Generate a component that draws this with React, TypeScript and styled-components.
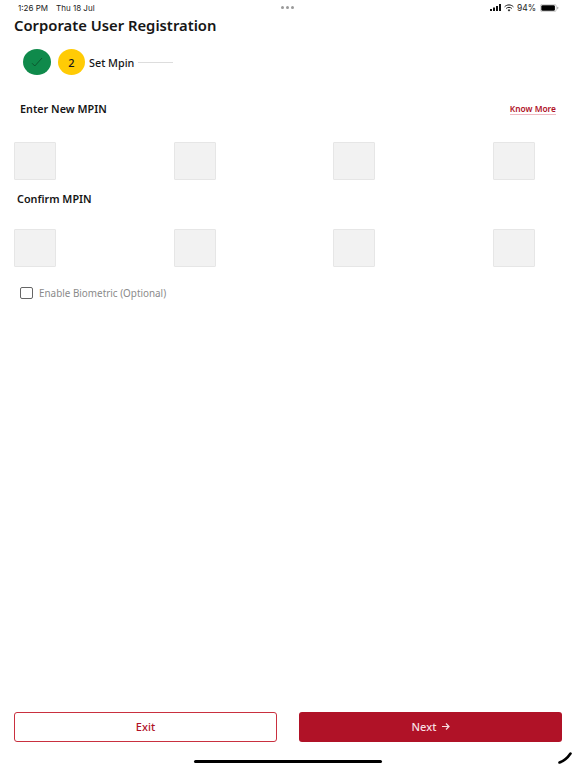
import styled, { createGlobalStyle } from "styled-components";

const GlobalStyle = createGlobalStyle`
  html, body {
    margin: 0;
    padding: 0;
    background: #ffffff;
  }
  * {
    box-sizing: border-box;
  }
`;

const PIN_SLOTS = [0, 1, 2, 3];

function PinRow() {
  return (
    <PinBoxes>
      {PIN_SLOTS.map((slot) => (
        <PinBox key={slot} />
      ))}
    </PinBoxes>
  );
}

export default function App() {
  return (
    <Page>
      <GlobalStyle />
      <StatusBar>
        <StatusTime>1:26 PM</StatusTime>
        <StatusDate>Thu 18 Jul</StatusDate>
        <StatusDots>
          <Dot />
          <Dot />
          <Dot />
        </StatusDots>
        <StatusRight>
          <svg width="12" height="7" viewBox="0 0 12 7" fill="#111">
            <rect x="0" y="5" width="2" height="2" />
            <rect x="3" y="3.5" width="2" height="3.5" />
            <rect x="6" y="2" width="2" height="5" />
            <rect x="9" y="0" width="2" height="7" />
          </svg>
          <svg width="10" height="8" viewBox="0 0 10 8" fill="none" stroke="#111">
            <path d="M0.6 2.8 C3 0.3 7 0.3 9.4 2.8" strokeWidth="1" />
            <path d="M2.2 4.4 C3.8 3 6.2 3 7.8 4.4" strokeWidth="1" />
            <path d="M5 7.6 L3.7 6 C4.4 5.4 5.6 5.4 6.3 6 Z" fill="#111" stroke="none" />
          </svg>
          <StatusPercent>94%</StatusPercent>
          <svg width="19" height="8" viewBox="0 0 19 8">
            <rect x="0.3" y="0.3" width="16" height="7.4" rx="2.2" fill="none" stroke="#aaa" strokeWidth="0.6" />
            <rect x="1.3" y="1.3" width="13.6" height="5.4" rx="1.3" fill="#000" />
            <rect x="17.2" y="2.8" width="1" height="2.4" rx="0.5" fill="#aaa" />
          </svg>
        </StatusRight>
      </StatusBar>

      <Title>Corporate User Registration</Title>

      <Stepper>
        <DoneStep>
          <svg width="12" height="10" viewBox="0 0 12 10" fill="none" stroke="#0b4a28" strokeWidth="0.8">
            <path d="M1 6.2 L3.8 9 L11 1" />
          </svg>
        </DoneStep>
        <CurrentStep>2</CurrentStep>
        <StepLabel>Set Mpin</StepLabel>
        <StepLine />
      </Stepper>

      <NewPinHeader>
        <NewPinLabel>Enter New MPIN</NewPinLabel>
        <KnowMore>Know More</KnowMore>
      </NewPinHeader>
      <PinRow />

      <ConfirmLabel>Confirm MPIN</ConfirmLabel>
      <PinRow />

      <BiometricRow>
        <CheckBox />
        <BiometricText>Enable Biometric (Optional)</BiometricText>
      </BiometricRow>

      <Spacer />

      <Footer>
        <ExitButton>Exit</ExitButton>
        <NextButton>
          Next
          <svg width="9" height="9" viewBox="0 0 9 9" fill="none" stroke="#f7dfe2" strokeWidth="1.2">
            <path d="M1 4.5 H8 M5 1.5 L8 4.5 L5 7.5" />
          </svg>
        </NextButton>
      </Footer>

      <HomeArea>
        <HomeIndicator />
      </HomeArea>
      <PencilMark width="14" height="12" viewBox="0 0 14 12" fill="none" stroke="#000" strokeWidth="2.6" strokeLinecap="round">
        <path d="M1.5 10.5 C6 9 9.5 6 12.5 1.5" />
      </PencilMark>
    </Page>
  );
}

const Page = styled.div`
  position: relative;
  display: flex;
  flex-direction: column;
  width: 576px;
  height: 768px;
  overflow: hidden;
  background: #ffffff;
  font-family: "Noto Sans", sans-serif;
  color: #161616;
`;

const StatusBar = styled.div`
  display: flex;
  align-items: center;
  height: 15px;
  padding: 0 18px;
  font-family: "Inter", sans-serif;
  font-size: 8px;
  color: #222222;
`;

const StatusTime = styled.span`
  width: 38px;
`;

const StatusDate = styled.span`
  width: 225px;
`;

const StatusDots = styled.div`
  display: flex;
  gap: 2px;
`;

const Dot = styled.span`
  width: 3px;
  height: 3px;
  border-radius: 50%;
  background: #9a9a9a;
`;

const StatusRight = styled.div`
  display: flex;
  align-items: center;
  gap: 2px;
  margin-left: auto;
  margin-right: -1px;
`;

const StatusPercent = styled.span`
  margin: 0 2px 0 1px;
  font-size: 8.5px;
`;

const Title = styled.h1`
  margin: 1px 0 0 14px;
  font-size: 14.8px;
  line-height: 19px;
  font-weight: 600;
  color: #161616;
`;

const Stepper = styled.div`
  display: flex;
  align-items: center;
  margin: 14px 0 0 23px;
  height: 26px;
`;

const DoneStep = styled.div`
  display: flex;
  align-items: center;
  justify-content: center;
  width: 28px;
  height: 26px;
  border-radius: 50%;
  background: #0f8a4b;
`;

const CurrentStep = styled.div`
  display: flex;
  align-items: center;
  justify-content: center;
  width: 27px;
  height: 26px;
  margin-left: 7px;
  border-radius: 50%;
  background: #ffcb05;
  font-size: 11px;
  font-weight: 500;
`;

const StepLabel = styled.span`
  margin-left: 4px;
  font-size: 10.8px;
  font-weight: 500;
`;

const StepLine = styled.span`
  width: 35px;
  height: 1px;
  margin-left: 4px;
  background: #dddddd;
`;

const NewPinHeader = styled.div`
  display: flex;
  align-items: center;
  justify-content: space-between;
  height: 16px;
  margin: 25px 0 1px;
  padding: 0 20px;
`;

const NewPinLabel = styled.span`
  font-size: 10.8px;
  font-weight: 600;
`;

const KnowMore = styled.a`
  margin-top: 2px;
  border-bottom: 1px solid #eeb9c1;
  font-size: 8.4px;
  line-height: 11px;
  font-weight: 600;
  color: #b01227;
`;

const PinBoxes = styled.div`
  display: flex;
  justify-content: space-between;
  margin-top: 25px;
  padding: 0 41px 0 14px;
`;

const PinBox = styled.div`
  width: 42px;
  height: 38px;
  border: 1px solid #e6e6e6;
  border-radius: 1px;
  background: #f2f2f2;
`;

const ConfirmLabel = styled.div`
  height: 16px;
  margin: 11px 0 -3px 17px;
  font-size: 10.8px;
  line-height: 16px;
  font-weight: 600;
`;

const BiometricRow = styled.div`
  display: flex;
  align-items: center;
  gap: 6px;
  height: 12px;
  margin: 20px 0 0 20px;
`;

const CheckBox = styled.span`
  width: 13px;
  height: 12px;
  border: 1.5px solid #666666;
  border-radius: 2px;
`;

const BiometricText = styled.span`
  font-size: 9.9px;
  line-height: 10px;
  color: #8a8a8a;
`;

const Spacer = styled.div`
  flex: 1;
`;

const Footer = styled.div`
  display: grid;
  grid-template-columns: 1fr 1fr;
  gap: 22px;
  padding: 0 14px;
`;

const ExitButton = styled.button`
  height: 30px;
  padding: 0 0 2px;
  border: 1px solid #c9303f;
  border-radius: 3px;
  background: #ffffff;
  font-family: inherit;
  font-size: 11px;
  font-weight: 500;
  color: #b01227;
`;

const NextButton = styled.button`
  display: flex;
  align-items: center;
  justify-content: center;
  gap: 5px;
  height: 30px;
  padding: 0 0 2px 1px;
  border: 0;
  border-radius: 3px;
  background: #b01227;
  font-family: inherit;
  font-size: 11px;
  font-weight: 500;
  color: #f7dfe2;
`;

const HomeArea = styled.div`
  display: flex;
  justify-content: center;
  height: 26px;
  padding-top: 18px;
`;

const HomeIndicator = styled.div`
  width: 188px;
  height: 3px;
  border-radius: 2px;
  background: #000000;
`;

const PencilMark = styled.svg`
  position: absolute;
  right: 4px;
  bottom: 4px;
`;
